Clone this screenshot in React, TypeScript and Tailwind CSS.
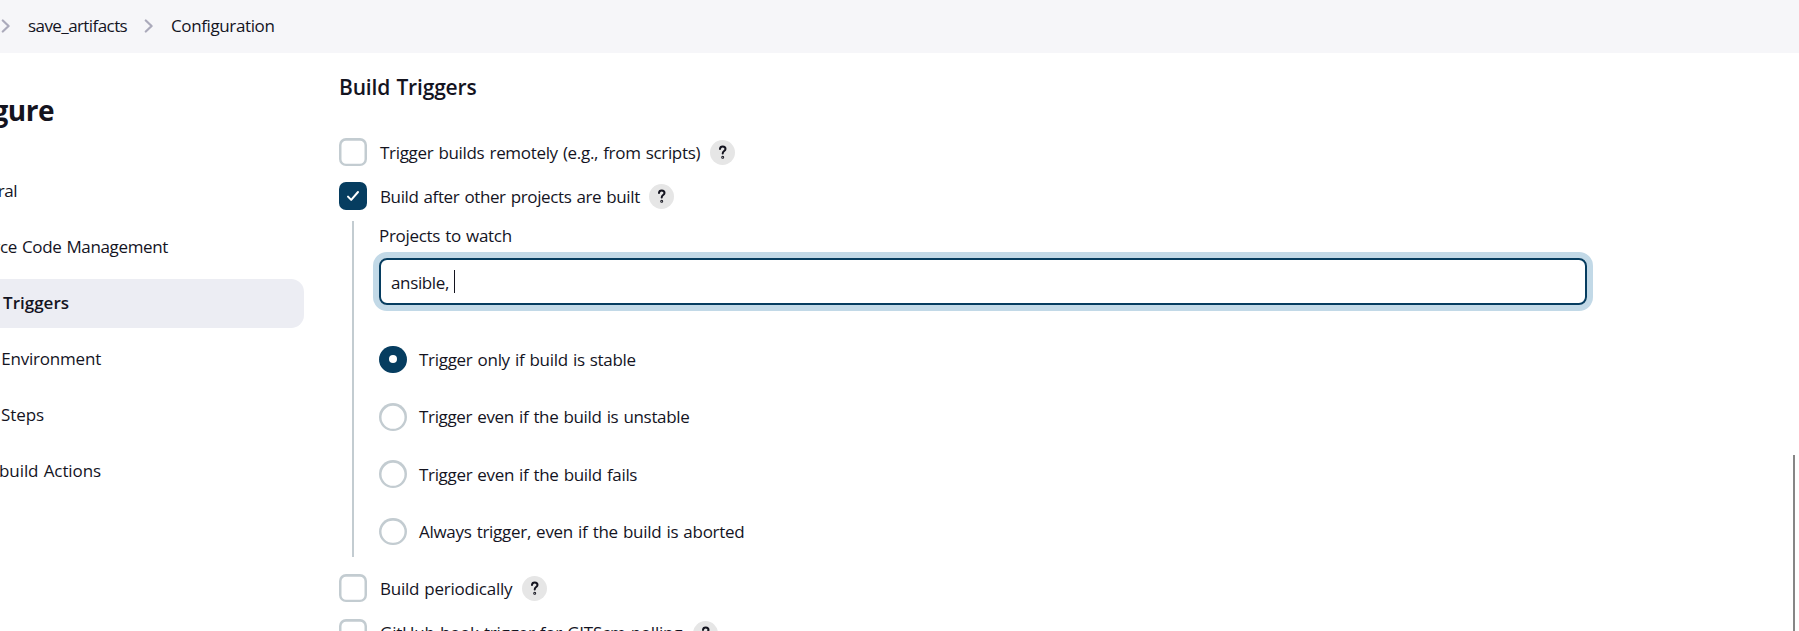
import type { ReactNode } from "react";

function Chevron() {
  return (
    <svg width="10" height="14" viewBox="0 0 10 14" fill="none" stroke="#abaabb" strokeWidth="2.2" strokeLinecap="round" strokeLinejoin="round" className="shrink-0">
      <path d="M2.8 1.5 8.6 7 2.8 12.5" />
    </svg>
  );
}

function Help() {
  return (
    <span className="flex h-[25px] w-[25px] shrink-0 items-center justify-center rounded-full bg-[#e6e6e6]">
      <svg width="10" height="15" viewBox="0 0 10 15" fill="none" stroke="#14141f" strokeWidth="2" strokeLinecap="round" strokeLinejoin="round">
        <path d="M2 4C2.1 2.4 3.2 1.5 4.7 1.5s2.8 1 2.8 2.5C7.5 6 4.7 6.2 4.7 8.400" />
        <circle cx="4.7" cy="12.2" r="0.5" />
      </svg>
    </span>
  );
}

function Check({ label, checked, spacing, help }: { label: string; checked?: boolean; spacing: string; help: string }) {
  return (
    <div className="flex h-7 items-center">
      {checked ? (
        <span className="flex h-7 w-7 shrink-0 items-center justify-center rounded-[7px] bg-[#063d60]">
          <svg width="14" height="12" viewBox="0 0 14 12" fill="none" stroke="#fff" strokeWidth="2" strokeLinecap="round" strokeLinejoin="round">
            <path d="M2 6.6 5.2 9.9 12 2" />
          </svg>
        </span>
      ) : (
        <span className="h-7 w-7 shrink-0 rounded-[7px] shadow-[inset_0_0.3px_0_2.5px_#c3ccd1]" />
      )}
      <span className={"ml-[13px] whitespace-nowrap " + spacing}>{label}</span>
      <span className={help}><Help /></span>
    </div>
  );
}

function Radio({ label, checked, spacing }: { label: string; checked?: boolean; spacing: string }) {
  return (
    <div className="flex h-[27.5px] items-center">
      {checked ? (
        <span className="flex h-full w-7 shrink-0 items-center justify-center rounded-full bg-[#063d60]">
          <span className="h-2 w-2 rounded-full bg-white" />
        </span>
      ) : (
        <span className="h-full w-7 shrink-0 rounded-full shadow-[inset_0_0.3px_0_2.5px_#c3ccd1]" />
      )}
      <span className={"ml-3 whitespace-nowrap " + spacing}>{label}</span>
    </div>
  );
}

function NavItem({ children, active }: { children: ReactNode; active?: boolean }) {
  return (
    <div className={"flex h-[49px] items-center whitespace-nowrap " + (active ? "rounded-r-[13px] bg-[#ecedf3] font-semibold" : "")}>
      {children}
    </div>
  );
}

export default function App() {
  return (
    <div className="flex h-[631px] w-[1799px] flex-col overflow-hidden bg-white font-['Open_Sans','Noto_Sans',sans-serif] text-[17px] leading-6 text-[#14141f] [word-spacing:1px]">
      <header className="flex h-[53px] shrink-0 items-center bg-[#f6f6f9] pb-[2px]">
        <Chevron />
        <span className="ml-[18px] w-[99px] whitespace-nowrap tracking-[-0.58px]">save_artifacts</span>
        <span className="ml-4 flex"><Chevron /></span>
        <span className="ml-[18px] whitespace-nowrap tracking-[-0.38px]">Configuration</span>
      </header>
      <div className="flex min-h-0 flex-1">
        <aside className="w-[304px] shrink-0">
          <h1 className="mt-[37px] flex h-10 w-[54px] items-center justify-end text-[28px] font-bold tracking-[-0.5px]">Configure</h1>
          <nav className="mt-[36.8px] flex flex-col gap-[6.9px]">
            <NavItem><span className="flex w-[17px] justify-end tracking-[-0.5px]">General</span></NavItem>
            <NavItem><span className="flex w-[168px] justify-end tracking-[-0.36px]">Source Code Management</span></NavItem>
            <NavItem active><span className="flex w-[69px] justify-end tracking-[0px]">Build Triggers</span></NavItem>
            <NavItem><span className="flex w-[101px] justify-end tracking-[-0.2px]">Build Environment</span></NavItem>
            <NavItem><span className="flex w-[44px] justify-end tracking-[-0.1px]">Build Steps</span></NavItem>
            <NavItem><span className="flex w-[101px] justify-end tracking-[-0.1px]">Post-build Actions</span></NavItem>
          </nav>
        </aside>
        <main className="ml-[35px] w-[1248px] shrink-0">
          <h2 className="mt-[19px] h-[31px] text-[21px] font-semibold leading-[30px] tracking-[-0.17px]">Build Triggers</h2>
          <div className="mt-[35px] flex flex-col gap-4">
            <Check label="Trigger builds remotely (e.g., from scripts)" spacing="pt-[1px] w-[319px] tracking-[-0.32px]" help="ml-[11px]" />
            <Check checked label="Build after other projects are built" spacing="pt-[1px] w-[259px] tracking-[-0.38px]" help="ml-[10px]" />
          </div>
          <div className="ml-[13px] mt-[11px] h-[336px] border-l-2 border-[#c3ccd1] pl-[25px]">
            <div className="h-[37px] pt-[3px] tracking-[-0.3px]">Projects to watch</div>
            <div className="flex h-[47px] items-center rounded-[8px] border-2 border-[#063d60] pl-[10px] shadow-[0_0_0_6px_#c2d9e7]">
              <span className="w-[63px] whitespace-nowrap pt-[2px] tracking-[-0.36px]">ansible,</span>
              <span className="h-[23px] w-px bg-[#14141f]" />
            </div>
            <div className="mt-[40.7px] flex flex-col gap-[29.9px]">
              <Radio checked label="Trigger only if build is stable" spacing="pt-[1px] tracking-[-0.3px]" />
              <Radio label="Trigger even if the build is unstable" spacing="pt-[1px] tracking-[-0.34px]" />
              <Radio label="Trigger even if the build fails" spacing="pt-[1px] tracking-[-0.33px]" />
              <Radio label="Always trigger, even if the build is aborted" spacing="pt-[1px] tracking-[-0.29px]" />
            </div>
          </div>
          <div className="mt-[17px] flex flex-col gap-[17px]">
            <Check label="Build periodically" spacing="pt-[1px] w-[131px] tracking-[-0.24px]" help="ml-[11px]" />
            <Check label="GitHub hook trigger for GITScm polling" spacing="w-[301px] tracking-[-0.23px]" help="ml-[12px]" />
          </div>
        </main>
        <div className="ml-auto mt-[402px] w-[6px] shrink-0"><div className="h-full w-[2px] bg-[#868686]" /></div>
      </div>
    </div>
  );
}
